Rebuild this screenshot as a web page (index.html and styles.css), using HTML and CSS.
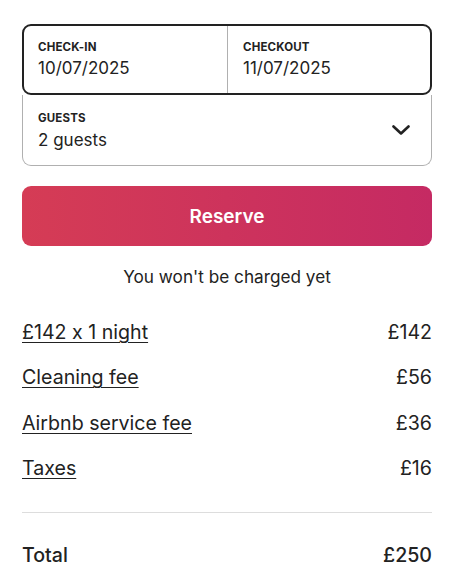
FILE: index.html
```html
<!DOCTYPE html>
<html lang="en">
<head>
<meta charset="utf-8">
<title>Reserve</title>
<link rel="stylesheet" href="styles.css">
</head>
<body>
<div class="panel">
  <div class="picker">
    <div class="dates">
      <div class="field">
        <div class="label">CHECK-IN</div>
        <div class="value">10/07/2025</div>
      </div>
      <div class="field field-right">
        <div class="label">CHECKOUT</div>
        <div class="value">11/07/2025</div>
      </div>
    </div>
    <div class="guests">
      <div class="field">
        <div class="label">GUESTS</div>
        <div class="value">2 guests</div>
      </div>
      <svg class="chevron" viewBox="0 0 18 10" width="18" height="10" aria-hidden="true">
        <path d="M1.5 1.5 L9 8.5 L16.5 1.5" fill="none" stroke="#222" stroke-width="2.6" stroke-linecap="round" stroke-linejoin="round"/>
      </svg>
    </div>
  </div>
  <button class="reserve">Reserve</button>
  <p class="note">You won't be charged yet</p>
  <div class="lines">
    <div class="line"><span class="link">£142 x 1 night</span><span>£142</span></div>
    <div class="line"><span class="link">Cleaning fee</span><span>£56</span></div>
    <div class="line"><span class="link">Airbnb service fee</span><span>£36</span></div>
    <div class="line"><span class="link">Taxes</span><span>£16</span></div>
  </div>
  <div class="divider"></div>
  <div class="line total"><span>Total</span><span>£250</span></div>
</div>
</body>
</html>
```
FILE: styles.css
```css
html, body {
  margin: 0;
  padding: 0;
  background: #fff;
}
body {
  font-family: Inter, "Noto Sans", sans-serif;
  font-feature-settings: "calt" 0;
  color: #222;
}
.panel {
  padding: 24px 22px 0 22px;
  display: flex;
  flex-direction: column;
}
.picker {
  display: flex;
  flex-direction: column;
}
.dates {
  display: grid;
  grid-template-columns: 1fr 1fr;
  border: 2px solid #222;
  border-radius: 9px;
  height: 71px;
  box-sizing: border-box;
}
.field {
  padding: 13px 14px 0 14px;
  display: flex;
  flex-direction: column;
  gap: 3px;
}
.field-right {
  border-left: 1px solid #b0b0b0;
  padding-left: 15px;
}
.label {
  font-size: 11.5px;
  line-height: 16px;
  font-weight: 700;
  letter-spacing: 0.15px;
}
.value {
  font-size: 17px;
  line-height: 20px;
}
.guests {
  display: flex;
  align-items: center;
  justify-content: space-between;
  height: 71px;
  box-sizing: border-box;
  border: 1px solid #b0b0b0;
  border-top: none;
  border-radius: 0 0 9px 9px;
  padding-right: 21px;
}
.guests .field {
  padding-top: 15px;
  padding-left: 15px;
  gap: 4px;
  align-self: flex-start;
}
.chevron {
  display: block;
}
.reserve {
  margin-top: 20px;
  height: 60px;
  border: none;
  border-radius: 9px;
  background: linear-gradient(to right, #d53c55, #c52a63);
  color: #fff;
  font-family: Inter, "Noto Sans", sans-serif;
  font-size: 19px;
  font-weight: 600;
  padding: 0;
}
.note {
  margin: 21px 0 0 0;
  text-align: center;
  font-size: 17.2px;
  line-height: 20px;
}
.lines {
  margin-top: 33px;
  display: flex;
  flex-direction: column;
  gap: 21.3px;
}
.line {
  display: flex;
  justify-content: space-between;
  font-size: 19.6px;
  line-height: 24px;
}
.link {
  text-decoration: underline;
  text-decoration-thickness: 1px;
  text-underline-offset: 3px;
}
.divider {
  margin-top: 32px;
  height: 1px;
  background: #dddddd;
}
.total {
  margin-top: 30px;
  font-weight: 500;
}
```
